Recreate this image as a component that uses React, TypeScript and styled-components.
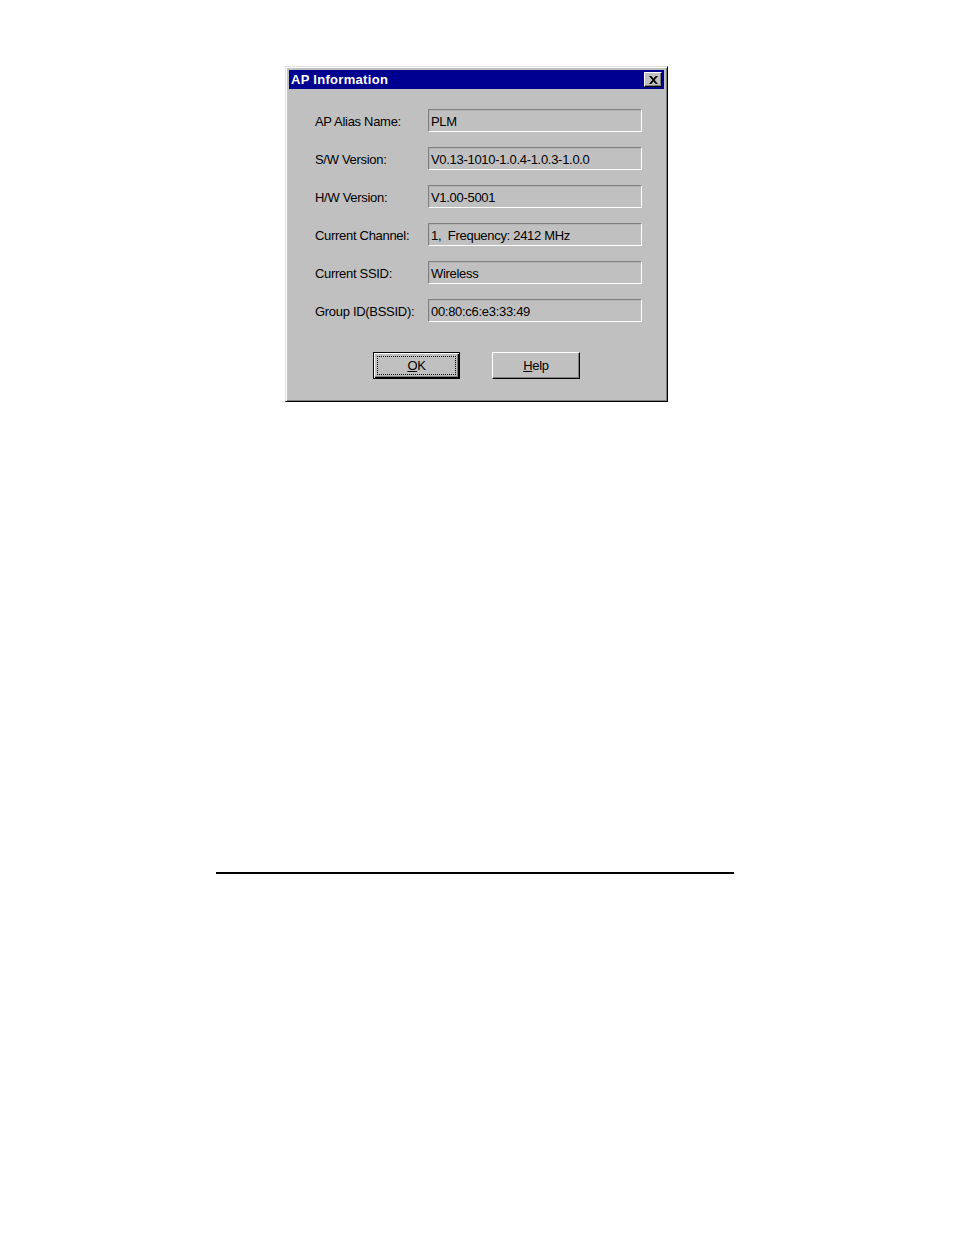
import styled, { createGlobalStyle } from 'styled-components'

const GlobalStyle = createGlobalStyle`
  body {
    margin: 0;
    background: #ffffff;
    font-family: 'Liberation Sans', Arial, sans-serif;
  }
`

const Page = styled.div`
  width: 954px;
  height: 1235px;
  padding-top: 66px;
  box-sizing: border-box;
`

const Dialog = styled.div`
  margin-left: 285px;
  width: 383px;
  height: 336px;
  box-sizing: border-box;
  background: #c0c0c0;
  border-top: 1px solid #dfdfdf;
  border-left: 1px solid #dfdfdf;
  border-right: 1px solid #000000;
  border-bottom: 1px solid #000000;
  box-shadow: inset 1px 1px 0 #ffffff, inset -1px -1px 0 #808080;
  padding: 3px;
  display: flex;
  flex-direction: column;
`

const TitleBar = styled.div`
  height: 19px;
  background: #000090;
  display: flex;
  align-items: center;
  justify-content: space-between;
  padding: 0 2px 0 2px;
`

const Title = styled.span`
  color: #ffffff;
  font-weight: bold;
  font-size: 13px;
  letter-spacing: 0.3px;
`

const CloseButton = styled.div`
  width: 18px;
  height: 15px;
  box-sizing: border-box;
  background: #c0c0c0;
  border-top: 1px solid #ffffff;
  border-left: 1px solid #ffffff;
  border-right: 1px solid #000000;
  border-bottom: 1px solid #000000;
  box-shadow: inset -1px -1px 0 #808080;
  display: flex;
  align-items: center;
  justify-content: center;
`

const Fields = styled.div`
  display: flex;
  flex-direction: column;
  gap: 15px;
  margin-top: 20px;
  padding-left: 26px;
`

const Row = styled.div`
  display: flex;
  align-items: center;
  height: 23px;
`

const Label = styled.span`
  width: 113px;
  font-size: 13px;
  letter-spacing: -0.3px;
  color: #000000;
  padding-top: 1px;
`

const Field = styled.div`
  width: 214px;
  height: 23px;
  box-sizing: border-box;
  border-top: 1px solid #808080;
  border-left: 1px solid #808080;
  border-right: 1px solid #ffffff;
  border-bottom: 1px solid #ffffff;
  box-shadow: inset 1px 1px 0 #b4b4b4;
  padding: 4px 0 0 2px;
  font-size: 13px;
  letter-spacing: -0.3px;
  color: #000000;
  white-space: pre;
`

const ButtonRow = styled.div`
  display: flex;
  justify-content: center;
  gap: 32px;
  margin-top: 30px;
`

const Button = styled.div<{ $default?: boolean }>`
  width: ${p => (p.$default ? 87 : 88)}px;
  height: 27px;
  box-sizing: border-box;
  background: #c0c0c0;
  font-size: 13px;
  letter-spacing: -0.3px;
  display: flex;
  align-items: center;
  justify-content: center;
  ${p =>
    p.$default
      ? `
    border: 1px solid #000000;
    box-shadow: inset 1px 1px 0 #ffffff, inset -1px -1px 0 #000000, inset -2px -2px 0 #808080;
  `
      : `
    border-top: 1px solid #ffffff;
    border-left: 1px solid #ffffff;
    border-right: 1px solid #000000;
    border-bottom: 1px solid #000000;
    box-shadow: inset -1px -1px 0 #808080;
  `}
`

const Focus = styled.div`
  width: 79px;
  height: 19px;
  box-sizing: border-box;
  border: 1px dotted #000000;
  display: flex;
  align-items: center;
  justify-content: center;
`

const Rule = styled.div`
  margin: 470px 0 0 216px;
  width: 518px;
  height: 2px;
  background: #000000;
`

const rows: [string, string][] = [
  ['AP Alias Name:', 'PLM'],
  ['S/W Version:', 'V0.13-1010-1.0.4-1.0.3-1.0.0'],
  ['H/W Version:', 'V1.00-5001'],
  ['Current Channel:', '1,  Frequency: 2412 MHz'],
  ['Current SSID:', 'Wireless'],
  ['Group ID(BSSID):', '00:80:c6:e3:33:49'],
]

export default function App() {
  return (
    <Page>
      <GlobalStyle />
      <Dialog>
        <TitleBar>
          <Title>AP Information</Title>
          <CloseButton>
            <svg width="9" height="8" viewBox="0 0 9 8">
              <path d="M0 0h2.2l2.3 2.6L6.8 0H9L5.6 4 9 8H6.8L4.5 5.4 2.2 8H0l3.4-4z" fill="#000" />
            </svg>
          </CloseButton>
        </TitleBar>
        <Fields>
          {rows.map(([label, value]) => (
            <Row key={label}>
              <Label>{label}</Label>
              <Field>{value}</Field>
            </Row>
          ))}
        </Fields>
        <ButtonRow>
          <Button $default>
            <Focus>
              <u>O</u>K
            </Focus>
          </Button>
          <Button>
            <u>H</u>elp
          </Button>
        </ButtonRow>
      </Dialog>
      <Rule />
    </Page>
  )
}
